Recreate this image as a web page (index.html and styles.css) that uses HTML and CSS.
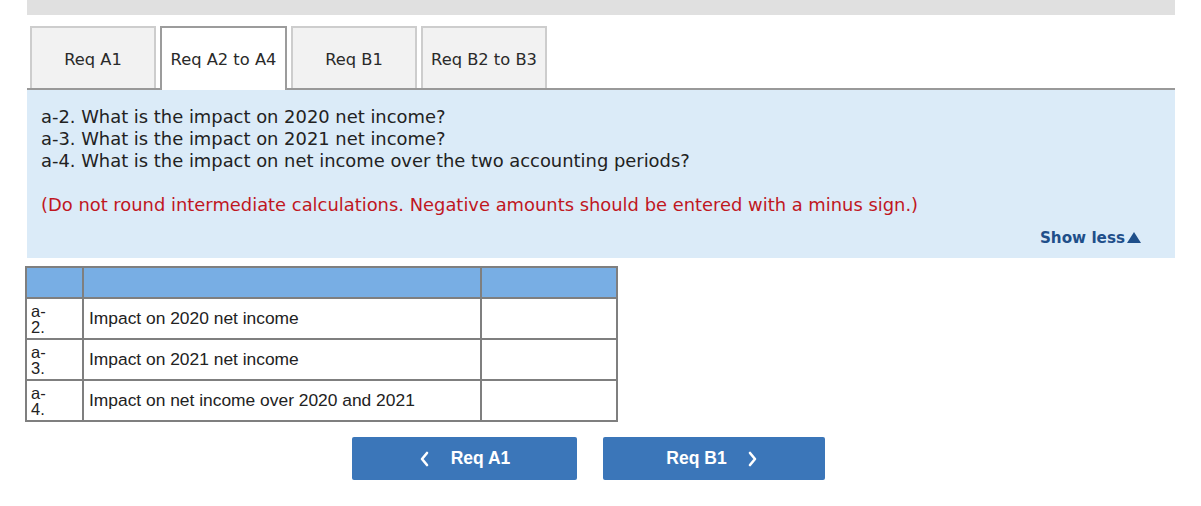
FILE: index.html
```html
<!DOCTYPE html>
<html>
<head>
<meta charset="utf-8">
<link rel="stylesheet" href="styles.css">
</head>
<body>
<div class="page">
  <div class="topbar"></div>
  <div class="tabs">
    <div class="tab">Req A1</div>
    <div class="tab active">Req A2 to A4</div>
    <div class="tab">Req B1</div>
    <div class="tab">Req B2 to B3</div>
  </div>
  <div class="panel">
    <p class="q">a-2. What is the impact on 2020 net income?<br>a-3. What is the impact on 2021 net income?<br>a-4. What is the impact on net income over the two accounting periods?</p>
    <p class="note">(Do not round intermediate calculations. Negative amounts should be entered with a minus sign.)</p>
    <div class="showless">Show less<svg class="tri" width="14" height="11" viewBox="0 0 14 11"><path d="M7 0 L14 11 L0 11 Z" fill="#1f4f8a"/></svg></div>
  </div>
  <table class="grid">
    <tr class="head"><th class="c1"></th><th class="c2"></th><th class="c3"></th></tr>
    <tr><td class="c1">a-<br>2.</td><td class="c2">Impact on 2020 net income</td><td class="c3"></td></tr>
    <tr><td class="c1">a-<br>3.</td><td class="c2">Impact on 2021 net income</td><td class="c3"></td></tr>
    <tr><td class="c1">a-<br>4.</td><td class="c2">Impact on net income over 2020 and 2021</td><td class="c3"></td></tr>
  </table>
  <div class="nav">
    <div class="btn prev"><svg class="chev" width="10" height="16" viewBox="0 0 10 16"><path d="M8 2 L3 8 L8 14" fill="none" stroke="#fff" stroke-width="2.6" stroke-linecap="round" stroke-linejoin="round"/></svg>Req A1</div>
    <div class="btn next">Req B1<svg class="chev" width="10" height="16" viewBox="0 0 10 16"><path d="M2 2 L7 8 L2 14" fill="none" stroke="#fff" stroke-width="2.6" stroke-linecap="round" stroke-linejoin="round"/></svg></div>
  </div>
</div>
</body>
</html>
```
FILE: styles.css
```css
html, body { margin: 0; padding: 0; background: #fff; }
.page { margin-left: 27px; width: 1148px; }
.topbar { height: 15px; background: #e0e0e0; }
.tabs { display: flex; gap: 4px; margin-top: 11px; padding-left: 3px; border-bottom: 2px solid #999; height: 62px; }
.tab {
  box-sizing: border-box; width: 126px; height: 62px;
  background: #f2f2f2; border: 2px solid #cdcdcd; border-bottom: none;
  display: flex; align-items: center; justify-content: center;
  font-family: "DejaVu Sans", Verdana, sans-serif; font-size: 16.3px; color: #2a2a2a;
  padding-top: 2px;
}
.tab.active { background: #fff; border-color: #9c9c9c; height: 64px; margin-bottom: -2px; width: 127px; padding-top: 0; }
.panel { background: #dbebf8; padding: 16px 34px 9px 14px; font-family: "DejaVu Sans", Verdana, sans-serif; font-size: 17.9px; line-height: 22px; }
.panel p { margin: 0; }
.q { color: #222; }
.note { color: #c0171f; margin-top: 22px !important; }
.showless { display: flex; justify-content: flex-end; align-items: center; font-weight: bold; color: #1f4f8a; font-size: 15.2px; margin-top: 11px; height: 22px; }
.tri { margin-left: 2px; margin-bottom: 2px; }
.grid { border-collapse: collapse; margin-top: 8px; font-family: "Liberation Sans", Arial, sans-serif; font-size: 17.4px; color: #222; margin-left: -2px; }
.grid td, .grid th { border: 2px solid #7f7f7f; padding: 0; }
.grid .head th { background: #78aee4; height: 29px; }
.grid td { height: 39px; background: #fff; }
.grid .c1 { width: 51px; padding-left: 4px; line-height: 16px; font-size: 16.5px; vertical-align: middle; }
.grid .c2 { width: 391px; padding-left: 5px; }
.grid .c3 { width: 134px; }
.nav { display: flex; gap: 26px; margin-top: 15px; margin-left: 325px; }
.btn {
  box-sizing: border-box; width: 225px; height: 43px; background: #3b76b9; border-radius: 2px;
  color: #fff; font-family: "Liberation Sans", Arial, sans-serif; font-weight: bold; font-size: 17.5px;
  display: flex; align-items: center; justify-content: center;
}
.btn.next { width: 222px; padding-right: 4px; }
.prev .chev { margin-right: 22px; }
.next .chev { margin-left: 21px; }
```
